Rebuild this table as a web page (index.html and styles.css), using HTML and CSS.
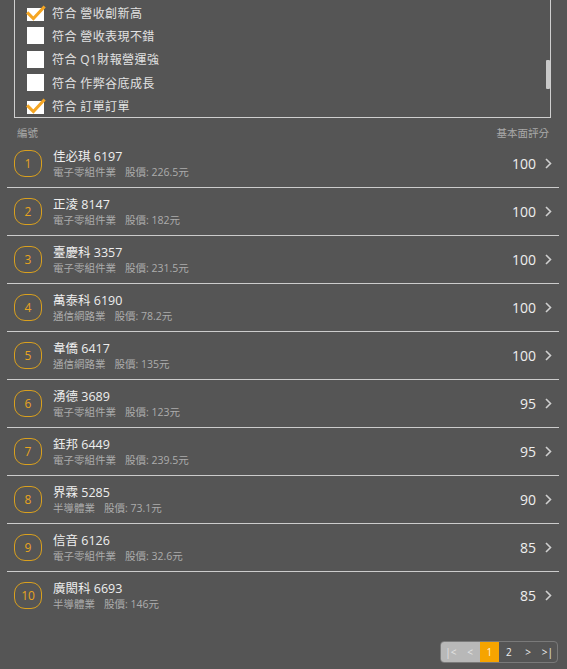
FILE: index.html
```html
<!DOCTYPE html>
<html lang="zh-Hant">
<head>
<meta charset="utf-8">
<title>篩選結果</title>
<link rel="stylesheet" href="styles.css">
</head>
<body>
<div class="filter">
  <div class="opt"><span class="cb on"><svg class="tick" viewBox="0 0 18 18"><polyline points="1.2,9.4 6.4,14.6 16.6,3.6"/></svg></span><span class="lbl">符合 營收創新高</span></div>
  <div class="opt"><span class="cb"></span><span class="lbl">符合 營收表現不錯</span></div>
  <div class="opt"><span class="cb"></span><span class="lbl">符合 Q1財報營運強</span></div>
  <div class="opt"><span class="cb"></span><span class="lbl">符合 作弊谷底成長</span></div>
  <div class="opt"><span class="cb on"><svg class="tick" viewBox="0 0 18 18"><polyline points="1.2,9.4 6.4,14.6 16.6,3.6"/></svg></span><span class="lbl">符合 訂單訂單</span></div>
  <span class="thumb"></span>
</div>

<div class="head"><span>編號</span><span>基本面評分</span></div>

<div class="list">
  <div class="row"><span class="badge">1</span><div class="info"><div class="name">佳必琪 6197</div><div class="sub">電子零組件業<span class="price">股價: 226.5元</span></div></div><span class="score">100</span><svg class="chev" viewBox="0 0 7 11"><polyline points="1,1 5.5,5.5 1,10"/></svg></div>
  <div class="row"><span class="badge">2</span><div class="info"><div class="name">正淩 8147</div><div class="sub">電子零組件業<span class="price">股價: 182元</span></div></div><span class="score">100</span><svg class="chev" viewBox="0 0 7 11"><polyline points="1,1 5.5,5.5 1,10"/></svg></div>
  <div class="row"><span class="badge">3</span><div class="info"><div class="name">臺慶科 3357</div><div class="sub">電子零組件業<span class="price">股價: 231.5元</span></div></div><span class="score">100</span><svg class="chev" viewBox="0 0 7 11"><polyline points="1,1 5.5,5.5 1,10"/></svg></div>
  <div class="row"><span class="badge">4</span><div class="info"><div class="name">萬泰科 6190</div><div class="sub">通信網路業<span class="price">股價: 78.2元</span></div></div><span class="score">100</span><svg class="chev" viewBox="0 0 7 11"><polyline points="1,1 5.5,5.5 1,10"/></svg></div>
  <div class="row"><span class="badge">5</span><div class="info"><div class="name">韋僑 6417</div><div class="sub">通信網路業<span class="price">股價: 135元</span></div></div><span class="score">100</span><svg class="chev" viewBox="0 0 7 11"><polyline points="1,1 5.5,5.5 1,10"/></svg></div>
  <div class="row"><span class="badge">6</span><div class="info"><div class="name">湧德 3689</div><div class="sub">電子零組件業<span class="price">股價: 123元</span></div></div><span class="score">95</span><svg class="chev" viewBox="0 0 7 11"><polyline points="1,1 5.5,5.5 1,10"/></svg></div>
  <div class="row"><span class="badge">7</span><div class="info"><div class="name">鈺邦 6449</div><div class="sub">電子零組件業<span class="price">股價: 239.5元</span></div></div><span class="score">95</span><svg class="chev" viewBox="0 0 7 11"><polyline points="1,1 5.5,5.5 1,10"/></svg></div>
  <div class="row"><span class="badge">8</span><div class="info"><div class="name">界霖 5285</div><div class="sub">半導體業<span class="price">股價: 73.1元</span></div></div><span class="score">90</span><svg class="chev" viewBox="0 0 7 11"><polyline points="1,1 5.5,5.5 1,10"/></svg></div>
  <div class="row"><span class="badge">9</span><div class="info"><div class="name">信音 6126</div><div class="sub">電子零組件業<span class="price">股價: 32.6元</span></div></div><span class="score">85</span><svg class="chev" viewBox="0 0 7 11"><polyline points="1,1 5.5,5.5 1,10"/></svg></div>
  <div class="row"><span class="badge">10</span><div class="info"><div class="name">廣閎科 6693</div><div class="sub">半導體業<span class="price">股價: 146元</span></div></div><span class="score">85</span><svg class="chev" viewBox="0 0 7 11"><polyline points="1,1 5.5,5.5 1,10"/></svg></div>
</div>

<div class="pager">
  <div class="pg">
    <span class="pb dim">|&lt;</span>
    <span class="pb dim">&lt;</span>
    <span class="pb cur">1</span>
    <span class="pb">2</span>
    <span class="pb">&gt;</span>
    <span class="pb">&gt;|</span>
  </div>
</div>
</body>
</html>
```

FILE: styles.css
```css
html, body {
  margin: 0;
  padding: 0;
  background: #555555;
}
body {
  font-family: "Open Sans", "Noto Sans CJK TC", sans-serif;
  color: #eeeeee;
  width: 567px;
  height: 669px;
  overflow: hidden;
}

/* filter box (scrolled, top edge out of view) */
.filter {
  position: relative;
  margin: 0 16px 0 14px;
  border: 1px solid #cfcfcf;
  border-top: none;
  padding-top: 1px;
  height: 116px;
  box-sizing: content-box;
}
.opt {
  display: flex;
  align-items: center;
  height: 23.3px;
  padding-left: 12px;
}
.cb {
  position: relative;
  flex: none;
  width: 17px;
  height: 17px;
  background: #ffffff;
}
.cb.on {
  background: linear-gradient(#555555 0 4px, #ffffff 4px);
}
.tick {
  position: absolute;
  left: 0;
  top: 0;
  width: 18px;
  height: 18px;
  overflow: visible;
}
.tick polyline {
  fill: none;
  stroke: #f5a623;
  stroke-width: 3;
  stroke-linecap: square;
  stroke-linejoin: miter;
}
.lbl {
  margin-left: 8px;
  font-size: 12px;
  letter-spacing: 0.4px;
  color: #e2e2e2;
}
.thumb {
  position: absolute;
  right: 0;
  top: 60px;
  width: 4px;
  height: 29px;
  background: #c9c9c9;
  border-radius: 1px;
}

/* header */
.head {
  display: flex;
  justify-content: space-between;
  margin: 9px 18px 0 17px;
  height: 13px;
  line-height: 13px;
  font-size: 10.5px;
  color: #a9a9a9;
}

/* list */
.list {
  margin: 0 8px 0 7px;
}
.row {
  display: flex;
  align-items: center;
  height: 47px;
  padding: 0 7px;
  border-bottom: 1px solid #cccccc;
}
.row:last-child {
  border-bottom: none;
}
.badge {
  flex: none;
  width: 28px;
  height: 27px;
  box-sizing: border-box;
  border: 1.5px solid #d9a01e;
  border-radius: 11px;
  display: flex;
  align-items: center;
  justify-content: center;
  font-size: 12px;
  color: #e8a420;
}
.info {
  margin-left: 11px;
}
.name {
  font-size: 12.5px;
  line-height: 17px;
  color: #eeeeee;
}
.sub {
  font-size: 10.5px;
  line-height: 15px;
  color: #acacac;
}
.price {
  margin-left: 9px;
}
.score {
  margin-left: auto;
  font-size: 14px;
  color: #eeeeee;
}
.chev {
  flex: none;
  width: 7px;
  height: 11px;
  margin-left: 9px;
}
.chev polyline {
  fill: none;
  stroke: #cfcfcf;
  stroke-width: 1.6;
}

/* pager */
.pager {
  display: flex;
  justify-content: flex-end;
  margin: 22px 9px 0 0;
}
.pg {
  display: flex;
  border: 1px solid #7a7a7a;
  border-radius: 4px;
  overflow: hidden;
}
.pb {
  width: 19.3px;
  height: 20px;
  display: flex;
  align-items: center;
  justify-content: center;
  font-size: 10px;
  color: #eeeeee;
}
.pb.dim {
  background: #b8b8b8;
  color: #e4e4e4;
}
.pb.cur {
  background: #f6a400;
  color: #fff4dc;
}
```
